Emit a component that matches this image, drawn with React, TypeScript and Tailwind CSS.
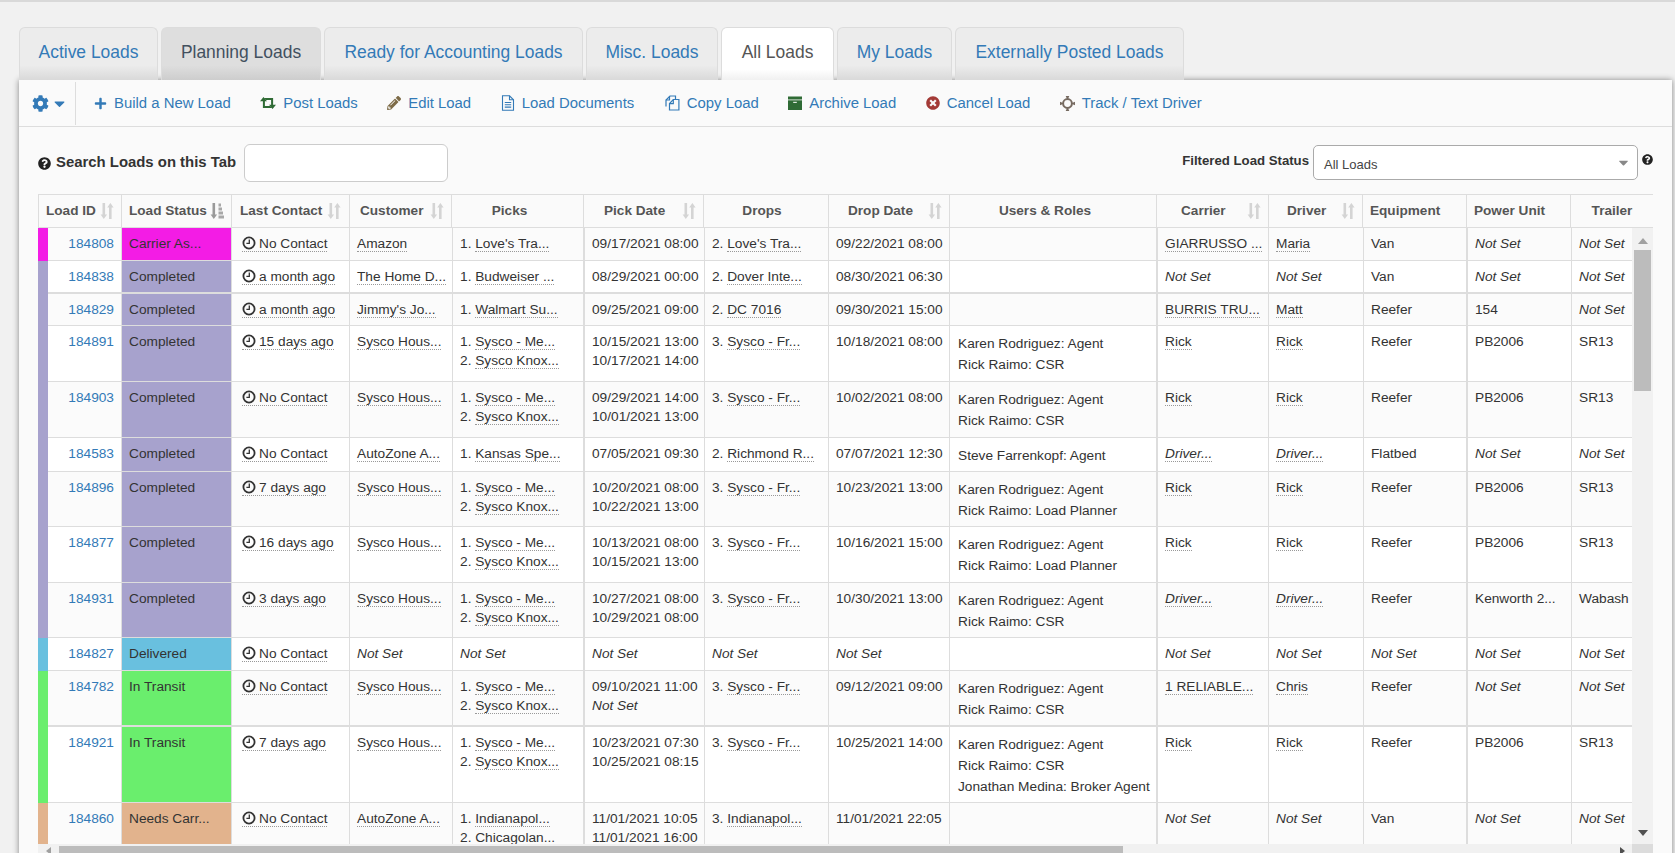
import React from "react";
import { FaCog, FaCaretDown, FaPlus, FaPencilAlt, FaTimesCircle, FaQuestionCircle } from "react-icons/fa";

const Clock = () => (
  <svg width="14" height="14" viewBox="0 0 14 14" className="inline-block align-[-2px] mr-[3px]">
    <circle cx="7" cy="7" r="5.6" fill="none" stroke="#333" strokeWidth="1.8" />
    <path d="M7.3 3.6V7.4H4.4" fill="none" stroke="#333" strokeWidth="1.3" />
  </svg>
);

const Sort = ({ on }: { on?: boolean }) => (
  <svg width="14" height="18" viewBox="0 0 14 18" className="shrink-0">
    <path d="M2.5 1h2.6v11.5h2L3.8 17 .6 12.5h1.9z" fill={on ? "#9a9a9a" : "#d4d4d4"} />
    {on ? (
      <path d="M8.500 1.500h2.500v3H8.500zM8.500 5.500h3.500v3H8.500zM8.500 9.500h4.500v3H8.500zM8.500 13.500h5.500v3H8.500z" fill="#a8a8a8" />
    ) : (
      <path d="M9 17V5.5H7.2L10.4 1l3.2 4.5h-2V17z" fill="#d4d4d4" />
    )}
  </svg>
);

const RetweetIcon = () => (
  <svg width="16" height="14" viewBox="0 0 16 14">
    <path d="M3.500 1L7 5.200H4.900V10h5.300l2 2H2.900V5.200H0z" fill="#2f6b35" />
    <path d="M12.500 13L9 8.800h2.100V4H5.800l-2-2h9.300v6.800H16z" fill="#2f6b35" />
  </svg>
);

const FileIcon = () => (
  <svg width="14" height="16" viewBox="0 0 14 16" fill="none" stroke="#337ab7" strokeWidth="1.1">
    <path d="M1.500.8h7l4 4v10.400h-11z" />
    <path d="M8.500.8v4h4M3.800 7.500h6.400M3.800 9.800h6.400M3.800 12.100h6.400" />
  </svg>
);

const CopyIcon = () => (
  <svg width="16" height="16" viewBox="0 0 16 16" fill="none" stroke="#337ab7" strokeWidth="1.2">
    <path d="M2 11.500V5l4-4h5.500v3" />
    <path d="M5.500 1.200V5H2" />
    <path d="M5.500 15V8.500l3.800-4h5.600V15z" />
    <path d="M9.300 4.800v3.900H5.500" />
  </svg>
);

const ArchiveIcon = () => (
  <svg width="14" height="14" viewBox="0 0 14 14">
    <rect x="0" y="0.500" width="14" height="3" fill="#2f6b35" />
    <rect x="0" y="4.300" width="14" height="9.700" fill="#2f6b35" />
    <rect x="5.200" y="5.800" width="3.600" height="1.200" fill="#dfe8df" />
  </svg>
);

const TrackIcon = () => (
  <svg width="15" height="15" viewBox="0 0 15 15">
    <circle cx="7.500" cy="7.500" r="4.400" fill="none" stroke="#766a60" strokeWidth="2" />
    <path d="M5.700 0h3.600L7.500 4.200zM5.700 15h3.600L7.500 10.800zM0 5.700v3.600l4.200-1.800zM15 5.700v3.600l-4.200-1.800z" fill="#766a60" />
  </svg>
);

const grey = "text-[#337ab7] bg-[linear-gradient(to_bottom,#ececec_72%,#d9d9d9)]";
const tabs = [
  { t: "Active Loads", w: "w-[139px]", c: grey },
  { t: "Planning Loads", w: "w-[160px]", c: "text-[#42505e] bg-[linear-gradient(to_bottom,#dedede_72%,#cdcdcd)]" },
  { t: "Ready for Accounting Loads", w: "w-[259px]", c: grey },
  { t: "Misc. Loads", w: "w-[132px]", c: grey },
  { t: "All Loads", w: "w-[113px]", c: "text-[#555] bg-[linear-gradient(to_bottom,#ffffff_80%,#f0f0f0)]" },
  { t: "My Loads", w: "w-[115px]", c: grey },
  { t: "Externally Posted Loads", w: "w-[229px]", c: grey },
];

const actions: [React.ReactNode, string][] = [
  [<FaPlus size={13} color="#337ab7" />, "Build a New Load"],
  [<RetweetIcon />, "Post Loads"],
  [<FaPencilAlt size={14} color="#7d6b47" />, "Edit Load"],
  [<FileIcon />, "Load Documents"],
  [<CopyIcon />, "Copy Load"],
  [<ArchiveIcon />, "Archive Load"],
  [<FaTimesCircle size={14} color="#a33a36" />, "Cancel Load"],
  [<TrackIcon />, "Track / Text Driver"],
];

type Head = { t: string; w: string; cls: string; sort?: boolean; on?: boolean };
const heads: Head[] = [
  { t: "Load ID", w: "w-[84px]", cls: "justify-between pl-[7px] pr-[7px]", sort: true },
  { t: "Load Status", w: "w-[110px]", cls: "justify-between pl-[7px] pr-[7px]", sort: true, on: true },
  { t: "Last Contact", w: "w-[118px]", cls: "justify-between pl-[8px] pr-[8px]", sort: true },
  { t: "Customer", w: "w-[102px]", cls: "justify-between pl-[10px] pr-[7px]", sort: true },
  { t: "Picks", w: "w-[132px]", cls: "justify-center pr-[16px]" },
  { t: "Pick Date", w: "w-[120px]", cls: "justify-between pl-[20px] pr-[7px]", sort: true },
  { t: "Drops", w: "w-[125px]", cls: "justify-center pr-[8px]" },
  { t: "Drop Date", w: "w-[121px]", cls: "justify-between pl-[19px] pr-[7px]", sort: true },
  { t: "Users & Roles", w: "w-[207px]", cls: "justify-center pr-[16px]" },
  { t: "Carrier", w: "w-[112px]", cls: "justify-between pl-[24px] pr-[7px]", sort: true },
  { t: "Driver", w: "w-[94px]", cls: "justify-between pl-[18px] pr-[7px]", sort: true },
  { t: "Equipment", w: "w-[104px]", cls: "justify-start pl-[7px]" },
  { t: "Power Unit", w: "w-[104px]", cls: "justify-start pl-[7px]" },
  { t: "Trailer", w: "w-[82px]", cls: "justify-center" },
];

type Row = {
  id: string; strip: string; status: string; contact: string; customer: string;
  picks: string[]; pickDates: string[]; drops: string; dropDate: string; users: string[];
  carrier: string; driver: string; equip: string; power: string; trailer: string; h: string; thick?: boolean;
};

const C = "Completed";
const sysPicks = ["Sysco - Me...", "Sysco Knox..."];
const KR = ["Karen Rodriguez: Agent", "Rick Raimo: CSR"];
const KP = ["Karen Rodriguez: Agent", "Rick Raimo: Load Planner"];
const NS = "Not Set";

const rows: Row[] = [
  { id: "184808", strip: "bg-[#f31ce5]", status: "Carrier As...", contact: "No Contact", customer: "Amazon", picks: ["Love's Tra..."], pickDates: ["09/17/2021 08:00"], drops: "2. Love's Tra...", dropDate: "09/22/2021 08:00", users: [], carrier: "GIARRUSSO ...", driver: "Maria", equip: "Van", power: NS, trailer: NS, h: "h-[33px]" },
  { id: "184838", strip: "bg-[#a7a2cd]", status: C, contact: "a month ago", customer: "The Home D...", picks: ["Budweiser ..."], pickDates: ["08/29/2021 00:00"], drops: "2. Dover Inte...", dropDate: "08/30/2021 06:30", users: [], carrier: NS, driver: NS, equip: "Van", power: NS, trailer: NS, h: "h-[33px]", thick: true },
  { id: "184829", strip: "bg-[#a7a2cd]", status: C, contact: "a month ago", customer: "Jimmy's Jo...", picks: ["Walmart Su..."], pickDates: ["09/25/2021 09:00"], drops: "2. DC 7016", dropDate: "09/30/2021 15:00", users: [], carrier: "BURRIS TRU...", driver: "Matt", equip: "Reefer", power: "154", trailer: NS, h: "h-[32px]" },
  { id: "184891", strip: "bg-[#a7a2cd]", status: C, contact: "15 days ago", customer: "Sysco Hous...", picks: sysPicks, pickDates: ["10/15/2021 13:00", "10/17/2021 14:00"], drops: "3. Sysco - Fr...", dropDate: "10/18/2021 08:00", users: KR, carrier: "Rick", driver: "Rick", equip: "Reefer", power: "PB2006", trailer: "SR13", h: "h-[56px]" },
  { id: "184903", strip: "bg-[#a7a2cd]", status: C, contact: "No Contact", customer: "Sysco Hous...", picks: sysPicks, pickDates: ["09/29/2021 14:00", "10/01/2021 13:00"], drops: "3. Sysco - Fr...", dropDate: "10/02/2021 08:00", users: KR, carrier: "Rick", driver: "Rick", equip: "Reefer", power: "PB2006", trailer: "SR13", h: "h-[56px]" },
  { id: "184583", strip: "bg-[#a7a2cd]", status: C, contact: "No Contact", customer: "AutoZone A...", picks: ["Kansas Spe..."], pickDates: ["07/05/2021 09:30"], drops: "2. Richmond R...", dropDate: "07/07/2021 12:30", users: ["Steve Farrenkopf: Agent"], carrier: "Driver...", driver: "Driver...", equip: "Flatbed", power: NS, trailer: NS, h: "h-[34px]" },
  { id: "184896", strip: "bg-[#a7a2cd]", status: C, contact: "7 days ago", customer: "Sysco Hous...", picks: sysPicks, pickDates: ["10/20/2021 08:00", "10/22/2021 13:00"], drops: "3. Sysco - Fr...", dropDate: "10/23/2021 13:00", users: KP, carrier: "Rick", driver: "Rick", equip: "Reefer", power: "PB2006", trailer: "SR13", h: "h-[55px]" },
  { id: "184877", strip: "bg-[#a7a2cd]", status: C, contact: "16 days ago", customer: "Sysco Hous...", picks: sysPicks, pickDates: ["10/13/2021 08:00", "10/15/2021 13:00"], drops: "3. Sysco - Fr...", dropDate: "10/16/2021 15:00", users: KP, carrier: "Rick", driver: "Rick", equip: "Reefer", power: "PB2006", trailer: "SR13", h: "h-[56px]" },
  { id: "184931", strip: "bg-[#a7a2cd]", status: C, contact: "3 days ago", customer: "Sysco Hous...", picks: sysPicks, pickDates: ["10/27/2021 08:00", "10/29/2021 08:00"], drops: "3. Sysco - Fr...", dropDate: "10/30/2021 13:00", users: KR, carrier: "Driver...", driver: "Driver...", equip: "Reefer", power: "Kenworth 2...", trailer: "Wabash", h: "h-[55px]" },
  { id: "184827", strip: "bg-[#69c0df]", status: "Delivered", contact: "No Contact", customer: NS, picks: [], pickDates: [NS], drops: NS, dropDate: NS, users: [], carrier: NS, driver: NS, equip: NS, power: NS, trailer: NS, h: "h-[33px]" },
  { id: "184782", strip: "bg-[#6aee6d]", status: "In Transit", contact: "No Contact", customer: "Sysco Hous...", picks: sysPicks, pickDates: ["09/10/2021 11:00", NS], drops: "3. Sysco - Fr...", dropDate: "09/12/2021 09:00", users: KR, carrier: "1 RELIABLE...", driver: "Chris", equip: "Reefer", power: NS, trailer: NS, h: "h-[56px]", thick: true },
  { id: "184921", strip: "bg-[#6aee6d]", status: "In Transit", contact: "7 days ago", customer: "Sysco Hous...", picks: sysPicks, pickDates: ["10/23/2021 07:30", "10/25/2021 08:15"], drops: "3. Sysco - Fr...", dropDate: "10/25/2021 14:00", users: [...KR, "Jonathan Medina: Broker Agent"], carrier: "Rick", driver: "Rick", equip: "Reefer", power: "PB2006", trailer: "SR13", h: "h-[76px]" },
  { id: "184860", strip: "bg-[#e2b38d]", status: "Needs Carr...", contact: "No Contact", customer: "AutoZone A...", picks: ["Indianapol...", "Chicagolan..."], pickDates: ["11/01/2021 10:05", "11/01/2021 16:00"], drops: "3. Indianapol...", dropDate: "11/01/2021 22:05", users: [], carrier: NS, driver: NS, equip: "Van", power: NS, trailer: NS, h: "h-[76px]" },
];

const Dot = ({ children }: { children: React.ReactNode }) => (
  <span className="border-b border-dotted border-[#999]">{children}</span>
);

const Val = ({ v, dotted }: { v: string; dotted?: boolean }) =>
  v === NS ? <i>{NS}</i> : v.startsWith("Driver") ? <Dot><i>{v}</i></Dot> : dotted ? <Dot>{v}</Dot> : <>{v}</>;

const Drop = ({ v }: { v: string }) => {
  if (v === NS) return <i>{NS}</i>;
  return <>{v.slice(0, 3)}<Dot>{v.slice(3)}</Dot></>;
};

const base = "align-top pt-[6px] px-[7px] leading-[19px] whitespace-nowrap overflow-hidden";
const usersBase = "align-top pt-[7px] pl-[8px] pr-[7px] leading-[21px] whitespace-nowrap overflow-hidden";

const TableBody = () => (
  <table className="table-fixed border-separate border-spacing-0 w-[1594px] text-[13.7px] text-[#333]">
    <colgroup>
      <col className="w-[10px]" /><col className="w-[74px]" /><col className="w-[110px]" /><col className="w-[118px]" />
      <col className="w-[103px]" /><col className="w-[132px]" /><col className="w-[120px]" /><col className="w-[124px]" />
      <col className="w-[121px]" /><col className="w-[208px]" /><col className="w-[111px]" /><col className="w-[95px]" />
      <col className="w-[104px]" /><col className="w-[104px]" /><col className="w-[60px]" />
    </colgroup>
    <tbody>
      {rows.map((r, i) => {
        const b = `border-b border-r border-[#ddd] ${r.thick ? "border-b-2" : ""}`;
        const zebra = i % 2 === 0 ? "bg-[#fbfbfb]" : "bg-white";
        return (
          <tr key={r.id} className={r.h}>
            <td className={r.strip} />
            <td className={`${base} ${b} ${zebra} text-right text-[#337ab7]`}>{r.id}</td>
            <td className={`${base} ${b} ${r.strip}`}>{r.status}</td>
            <td className={`${base} ${b} ${zebra} pl-[10px]`}>
              <span className="border-b border-dotted border-[#999]"><Clock />{r.contact}</span>
            </td>
            <td className={`${base} ${b} ${zebra}`}><Val v={r.customer} dotted /></td>
            <td className={`${base} ${b} ${zebra} border-r-2`}>
              {r.picks.length === 0 ? <i>{NS}</i> : r.picks.map((p, k) => (
                <div key={p}>{k + 1}. <Dot>{p}</Dot></div>
              ))}
            </td>
            <td className={`${base} ${b} ${zebra}`}>
              {r.pickDates.map((d, k) => <div key={k}><Val v={d} /></div>)}
            </td>
            <td className={`${base} ${b} ${zebra}`}><Drop v={r.drops} /></td>
            <td className={`${base} ${b} ${zebra}`}><Val v={r.dropDate} /></td>
            <td className={`${usersBase} ${b} ${zebra} border-r-2`}>
              {r.users.map((u) => <div key={u}>{u}</div>)}
            </td>
            <td className={`${base} ${b} ${zebra}`}><Val v={r.carrier} dotted /></td>
            <td className={`${base} ${b} ${zebra}`}><Val v={r.driver} dotted /></td>
            <td className={`${base} ${b} ${zebra} border-r-2`}><Val v={r.equip} /></td>
            <td className={`${base} ${b} ${zebra}`}><Val v={r.power} /></td>
            <td className={`${base} border-b border-[#ddd] ${r.thick ? "border-b-2" : ""} ${zebra}`}><Val v={r.trailer} /></td>
          </tr>
        );
      })}
    </tbody>
  </table>
);

export default function App() {
  return (
    <div className="w-[1675px] h-[853px] overflow-hidden bg-[#f1f1f1] border-t-2 border-[#d9d9d9] pt-[25px] pl-[19px] font-['Liberation_Sans',Arial,sans-serif]">
      <div className="flex gap-[3px] h-[53px]">
        {tabs.map((t) => (
          <div key={t.t} className={`${t.w} ${t.c} flex items-center justify-center border border-b-0 border-[#dcdcdc] rounded-t-[6px] text-[17.45px] pb-[4px] whitespace-nowrap`}>
            {t.t}
          </div>
        ))}
      </div>

      <div className="w-[1653px] h-[800px] bg-[#fafafa] shadow-[0_0_6px_rgba(0,0,0,0.45)]">
        <div className="flex items-center h-[47px] pt-[1px] border-b border-[#ddd]">
          <div className="flex items-center w-[57px] h-[43px] pl-[13px] border-r border-[#ddd]">
            <FaCog size={17} color="#337ab7" />
            <FaCaretDown size={17} color="#337ab7" className="ml-[2px]" />
          </div>
          <div className="flex items-center gap-[29.5px] pl-[18px] text-[14.9px] text-[#337ab7]">
            {actions.map(([icon, label]) => (
              <div key={label} className="flex items-center gap-[7px] whitespace-nowrap">
                {icon}
                <span>{label}</span>
              </div>
            ))}
          </div>
        </div>

        <div className="flex items-start h-[67px] pl-[19px] pr-[19px]">
          <div className="flex items-center mt-[17px]">
            <FaQuestionCircle size={13} color="#222" />
            <span className="ml-[5px] font-bold text-[14.9px] text-[#333] mt-[-2px]">Search Loads on this Tab</span>
            <div className="ml-[8px] w-[204px] h-[38px] bg-white border border-[#ccc] rounded-[6px]" />
          </div>
          <div className="ml-auto flex items-start mt-[18px]">
            <span className="mt-[6px] mr-[4px] font-bold text-[13.2px] text-[#333]">Filtered Load Status</span>
            <div className="flex items-center justify-between w-[325px] h-[35px] pl-[10px] pr-[6px] pt-[4px] bg-white border border-[#aaa] rounded-[5px] text-[13px] text-[#444]">
              <span>All Loads</span>
              <FaCaretDown size={15} color="#888" className="mt-[-5px]" />
            </div>
            <FaQuestionCircle size={11} color="#222" className="ml-[4px] mt-[9px]" />
          </div>
        </div>

        <div className="ml-[19px] w-[1615px] bg-[#fafafa]">
          <div className="flex h-[34px] border-y border-[#ddd] text-[13.6px] font-bold text-[#555]">
            {heads.map((h, i) => (
              <div key={h.t} className={`${h.w} ${h.cls} flex items-center ${i < heads.length - 1 ? "border-r" : ""} ${i === 0 ? "border-l" : ""} border-[#ddd] whitespace-nowrap`}>
                <span>{h.t}</span>
                {h.sort && <Sort on={h.on} />}
              </div>
            ))}
          </div>

          <div className="flex h-[616px]">
            <div className="w-[1594px] h-[616px] overflow-hidden">
              <TableBody />
            </div>
            <div className="w-[21px] bg-[#f1f1f1] flex flex-col items-center">
              <div className="w-0 h-0 mt-[10px] border-x-[5px] border-x-transparent border-b-[6px] border-b-[#a0a0a0]" />
              <div className="w-[17px] h-[141px] mt-[6px] bg-[#bcbcbc]" />
              <div className="w-0 h-0 mt-[439px] border-x-[5px] border-x-transparent border-t-[6px] border-t-[#505050]" />
            </div>
          </div>

          <div className="flex h-[9px] bg-[#f1f1f1]">
            <div className="w-[21px] flex justify-center items-start pt-[3px]">
              <div className="w-0 h-0 border-y-[4px] border-y-transparent border-r-[5px] border-r-[#a0a0a0]" />
            </div>
            <div className="w-[1064px] h-[7px] mt-[2px] bg-[#bcbcbc]" />
            <div className="ml-[497px] w-0 h-0 mt-[3px] border-y-[4px] border-y-transparent border-l-[5px] border-l-[#505050]" />
            <div className="ml-auto w-[21px] bg-[#dcdcdc]" />
          </div>
        </div>
      </div>
    </div>
  );
}
